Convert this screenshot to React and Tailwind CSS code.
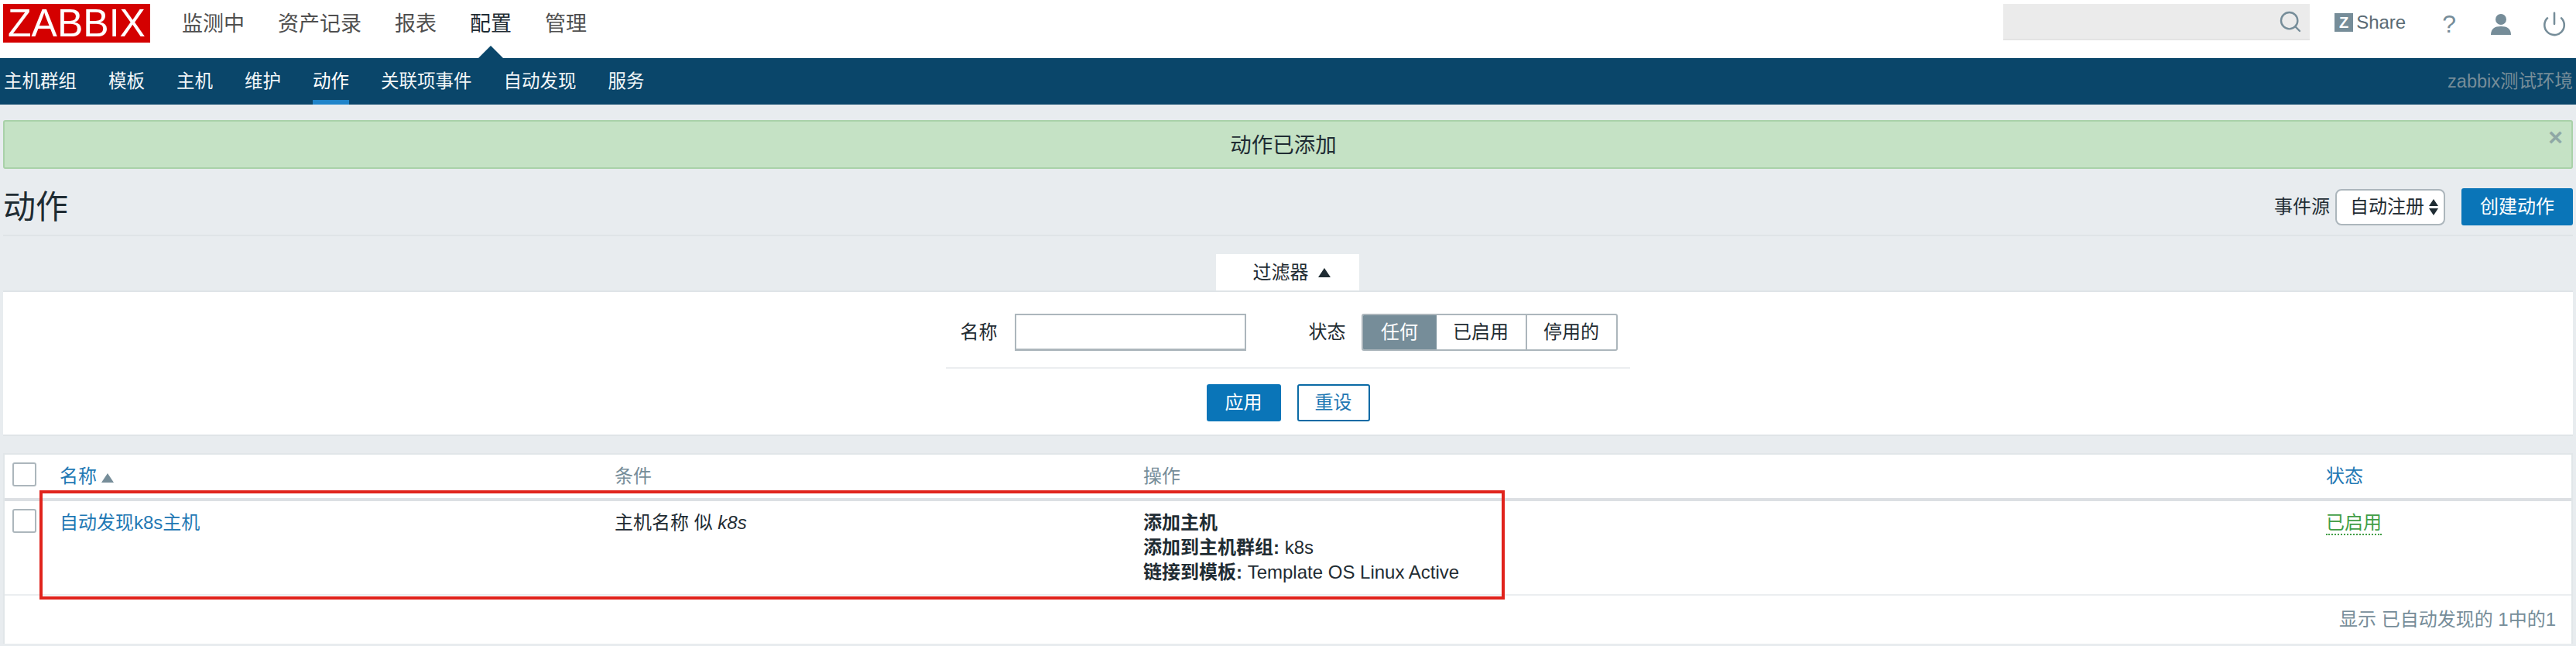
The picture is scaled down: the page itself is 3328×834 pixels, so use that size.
import { Power, Search } from "lucide-react";

const mainMenu = ["监测中", "资产记录", "报表", "配置", "管理"];
const subMenu = ["主机群组", "模板", "主机", "维护", "动作", "关联项事件", "自动发现", "服务"];

function Header() {
  return (
    <div className="flex h-[75px] items-start bg-white">
      <div className="ml-[4px] mt-[5px] flex h-[50px] w-[190px] items-center justify-center bg-[#d40000] text-[50px] leading-none text-white">
        ZABBIX
      </div>
      <div className="ml-[41px] mt-[13px] flex gap-[43px] text-[27px] leading-[36px] text-[#4f4f4f]">
        {mainMenu.map((item) => (
          <div key={item} className={item === "配置" ? "relative h-[62px] text-[#1f2c33]" : "h-[62px]"}>
            {item}
            {item === "配置" && (
              <div className="absolute left-[11px] top-[46px] h-0 w-0 border-x-[16px] border-b-[16px] border-x-transparent border-b-[#0a466a]"></div>
            )}
          </div>
        ))}
      </div>
      <div className="ml-auto mt-[5px] flex h-[47px] w-[396px] items-center justify-end border-b-2 border-[#e3e3e3] bg-[#ebebeb] pr-[9px] text-[#768d99]">
        <Search size={32} strokeWidth={1.8} />
      </div>
      <div className="ml-[32px] mt-[17px] flex h-[24px] w-[24px] items-center justify-center bg-[#768d99] text-[20px] font-bold leading-none text-white">
        Z
      </div>
      <div className="ml-[4px] mt-[13px] text-[24px] leading-[32px] text-[#5b6b74]">Share</div>
      <div className="ml-[47px] mt-[10px] text-[32px] leading-[42px] text-[#768d99]">?</div>
      <svg className="ml-[44px] mt-[15px] h-[32px] w-[28px]" viewBox="0 0 28 32">
        <circle cx="14" cy="10" r="7" fill="#768d99" />
        <path d="M1 30c0-8 5-11 13-11s13 3 13 11z" fill="#768d99" />
      </svg>
      <Power className="ml-[38px] mt-[14px] text-[#768d99]" size={34} strokeWidth={1.8} />
      <div className="w-[11px]"></div>
    </div>
  );
}

function SubNav() {
  return (
    <div className="flex h-[60px] items-start bg-[#0a466a] pl-[5px] text-[23.5px] leading-[60px] text-[#f2f6f8]">
      <div className="flex gap-[41px]">
        {subMenu.map((item) => (
          <div key={item} className={item === "动作" ? "h-[60px] border-b-[6px] border-[#1f84c9] text-white" : "h-[60px]"}>
            {item}
          </div>
        ))}
      </div>
      <div className="ml-auto pr-[4px] text-[#768d99]">zabbix测试环境</div>
    </div>
  );
}

function PageTitle() {
  return (
    <div className="mx-[4px] flex h-[87px] items-start justify-between border-b-2 border-[#dfe4e7] pt-[25px]">
      <div className="text-[42px] leading-[50px] text-[#1f2c33]">动作</div>
      <div className="flex items-center">
        <span className="text-[24px] text-[#1f2c33]">事件源</span>
        <div className="ml-[7px] flex h-[47px] w-[142px] items-center justify-between rounded-[8px] border-2 border-[#acb6bc] bg-white pl-[17px] pr-[7px] text-[24px] text-[#1f2c33]">
          自动注册
          <svg className="h-[21px] w-[12px]" viewBox="0 0 12 21">
            <path d="M6 0l6 9H0zM0 12h12l-6 9z" fill="#1f2c33" />
          </svg>
        </div>
        <button className="ml-[21px] h-[48px] w-[144px] rounded-[3px] bg-[#0a75b8] text-[24px] text-white">创建动作</button>
      </div>
    </div>
  );
}

function FilterPanel() {
  return (
    <div className="mt-[23px]">
      <div className="flex justify-center pr-[1px]">
        <div className="flex h-[47px] w-[185px] items-center justify-center gap-[12px] bg-white pl-[10px] text-[24px] text-[#1f2c33]">
          过滤器
          <span className="h-0 w-0 border-x-[8.5px] border-b-[12px] border-x-transparent border-b-[#1f2c33]"></span>
        </div>
      </div>
      <div className="mx-[4px] flex h-[188px] flex-col items-center border-y-2 border-[#dfe4e7] bg-white">
        <div className="mt-[28px] flex h-[48px] items-center pl-[2px] text-[24px] text-[#1f2c33]">
          <span>名称</span>
          <div className="ml-[22px] h-[48px] w-[299px] border-2 border-[#acb6bc] border-b-[3px]"></div>
          <span className="ml-[81px]">状态</span>
          <div className="ml-[20px] flex h-[48px] w-[331px] overflow-hidden rounded-[3px] border-2 border-[#acb6bc]">
            <div className="flex w-[95px] items-center justify-center bg-[#768d99] text-white">任何</div>
            <div className="flex w-[117px] items-center justify-center border-r-2 border-[#acb6bc]">已启用</div>
            <div className="flex flex-1 items-center justify-center">停用的</div>
          </div>
        </div>
        <div className="mt-[21px] w-[884px] border-t-2 border-[#ebeef0]"></div>
        <div className="mt-[20px] flex gap-[21px] text-[24px]">
          <button className="h-[48px] w-[96px] rounded-[3px] bg-[#0a75b8] text-white">应用</button>
          <button className="h-[48px] w-[94px] rounded-[3px] border-2 border-[#0a6aa5] bg-white text-[#1f78b4]">重设</button>
        </div>
      </div>
    </div>
  );
}

function ActionsTable() {
  return (
    <div className="relative mx-[4px] mt-[22px] border-x-2 border-t-2 border-[#e1e6e9] bg-white text-[24px] leading-[32px]">
      <div className="grid h-[60px] grid-cols-[71px_717px_683px_1528px_1fr] items-center border-b-[4px] border-[#dcdfe3]">
        <div className="ml-[10px] -mt-[5px] h-[31px] w-[31px] rounded-[3px] border-2 border-[#acb6bc]"></div>
        <div className="flex items-center gap-[6px] text-[#1f78b4]">
          名称
          <span className="mt-[4px] h-0 w-0 border-x-[8.5px] border-b-[12px] border-x-transparent border-b-[#768d99]"></span>
        </div>
        <div className="text-[#768d99]">条件</div>
        <div className="text-[#768d99]">操作</div>
        <div className="text-[#1f78b4]">状态</div>
      </div>
      <div className="grid h-[122px] grid-cols-[71px_717px_683px_1528px_1fr] border-b-2 border-[#ebeef0] pt-[10px]">
        <div className="ml-[10px] h-[31px] w-[31px] rounded-[3px] border-2 border-[#acb6bc]"></div>
        <div className="pt-[2px] text-[#1f78b4]">自动发现k8s主机</div>
        <div className="pt-[2px] text-[#1f2c33]">
          主机名称 似 <em>k8s</em>
        </div>
        <div className="pt-[2px] text-[#1f2c33]">
          <div className="font-bold">添加主机</div>
          <div>
            <span className="font-bold">添加到主机群组:</span> k8s
          </div>
          <div>
            <span className="font-bold">链接到模板:</span> Template OS Linux Active
          </div>
        </div>
        <div className="pt-[2px]">
          <span className="border-b-2 border-dotted border-[#429e47] pb-[1px] text-[#429e47]">已启用</span>
        </div>
      </div>
      <div className="flex h-[62px] items-center justify-end pr-[20px] text-[#768d99]">显示 已自动发现的 1中的1</div>
      <div className="absolute left-[45px] top-[46px] h-[141px] w-[1893px] border-[4px] border-[#e0231c]"></div>
    </div>
  );
}

export default function App() {
  return (
    <div className="h-[834px] overflow-hidden bg-[#e8ecef] font-['Liberation_Sans','Noto_Sans_CJK_SC',sans-serif]">
      <Header />
      <SubNav />
      <div className="relative mx-[4px] mt-[20px] flex h-[63px] items-center justify-center rounded-[3px] border-2 border-[#a9d1a9] bg-[#c5e2c5] pr-[12px] pt-[2px] text-[27.5px] text-[#1f2c33]">
        动作已添加
        <span className="absolute right-[11px] top-[8px] text-[32px] font-bold leading-[24px] text-[#8fa8a5]">×</span>
      </div>
      <PageTitle />
      <FilterPanel />
      <ActionsTable />
    </div>
  );
}
